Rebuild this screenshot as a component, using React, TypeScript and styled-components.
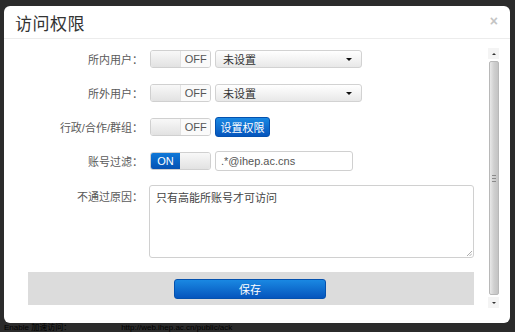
import styled, { createGlobalStyle } from 'styled-components'

const GlobalStyle = createGlobalStyle`
  html, body {
    margin: 0;
    padding: 0;
    background: #2b2b2b;
  }
  body {
    font-family: 'Liberation Sans', 'Noto Sans CJK SC', sans-serif;
    font-size: 11px;
  }
`

const Page = styled.div`
  width: 515px;
  height: 332px;
  box-sizing: border-box;
  padding: 6px 5px 0 4px;
  overflow: hidden;
`

const Modal = styled.div`
  width: 506px;
  height: 317px;
  background: #fff;
  border-radius: 6px;
  display: flex;
  flex-direction: column;
  overflow: hidden;
`

const Header = styled.div`
  height: 32px;
  flex-shrink: 0;
  display: flex;
  align-items: center;
  justify-content: space-between;
  padding: 0 12px 0 11px;
  border-bottom: 1px solid #ececec;
`

const Title = styled.h3`
  margin: 0;
  font-family: 'Noto Sans CJK SC', sans-serif;
  font-size: 17px;
  font-weight: 400;
  color: #333;
  letter-spacing: 0.5px;
`

const Close = styled.span`
  font-family: 'Liberation Sans', sans-serif;
  font-size: 14px;
  font-weight: bold;
  color: #c4c4c4;
  margin-top: -2px;
`

const Body = styled.div`
  flex: 1;
  display: flex;
  gap: 14px;
  padding: 9px 11px 15px 24px;
  min-height: 0;
`

const Content = styled.div`
  width: 446px;
  padding-top: 1px;
  display: flex;
  flex-direction: column;
  gap: 14px;
`

const Row = styled.div<{ $top?: boolean }>`
  display: flex;
  align-items: ${(p) => (p.$top ? 'flex-start' : 'center')};
  gap: 7px;
  min-height: 20px;
`

const Label = styled.label<{ $top?: boolean }>`
  width: 115px;
  flex-shrink: 0;
  text-align: right;
  color: #5a5a5a;
  font-size: 11px;
  white-space: nowrap;
  padding-top: ${(p) => (p.$top ? '3px' : '0')};
`

const Switch = styled.div`
  display: flex;
  width: 61px;
  height: 18px;
  box-sizing: border-box;
  border: 1px solid #d0d0d0;
  border-radius: 3px;
  overflow: hidden;
  flex-shrink: 0;
`

const SwitchPart = styled.span<{ $kind: 'on' | 'off' | 'blank'; $w: number }>`
  width: ${(p) => p.$w}px;
  display: flex;
  align-items: center;
  justify-content: center;
  font-size: 11px;
  color: ${(p) => (p.$kind === 'on' ? '#fff' : '#555')};
  background: ${(p) =>
    p.$kind === 'on'
      ? 'linear-gradient(to bottom, #0f78d8, #0552b4)'
      : p.$kind === 'off'
        ? '#fafafa'
        : 'linear-gradient(to bottom, #f8f8f8, #e2e2e2)'};
  border-left: ${(p) => (p.$kind === 'off' ? '1px solid #e2e2e2' : 'none')};
`

const Toggle = ({ on }: { on: boolean }) =>
  on ? (
    <Switch>
      <SwitchPart $kind="on" $w={30}>ON</SwitchPart>
      <SwitchPart $kind="blank" $w={31} />
    </Switch>
  ) : (
    <Switch>
      <SwitchPart $kind="blank" $w={31} />
      <SwitchPart $kind="off" $w={30}>OFF</SwitchPart>
    </Switch>
  )

const Select = styled.div`
  width: 147px;
  height: 18px;
  box-sizing: border-box;
  margin-left: -3px;
  display: flex;
  align-items: center;
  justify-content: space-between;
  padding: 0 9px 0 7px;
  border: 1px solid #d2d2d2;
  border-radius: 3px;
  background: linear-gradient(to bottom, #ffffff, #e8e8e8);
  color: #333;
  font-size: 11px;
`

const Caret = styled.span`
  width: 0;
  height: 0;
  border-left: 3px solid transparent;
  border-right: 3px solid transparent;
  border-top: 3px solid #111;
`

const BlueButton = styled.button<{ $w: number; $shift?: boolean }>`
  width: ${(p) => p.$w}px;
  height: 20px;
  margin-left: ${(p) => (p.$shift ? '-3px' : '0')};
  border: 1px solid #0451ae;
  border-radius: 3px;
  background: linear-gradient(to bottom, #1a88e2, #0555bd);
  color: #fff;
  font-family: 'Liberation Sans', 'Noto Sans CJK SC', sans-serif;
  font-size: 11px;
  padding: 0;
  display: flex;
  align-items: center;
  justify-content: center;
`

const TextInput = styled.div`
  width: 138px;
  height: 20px;
  box-sizing: border-box;
  margin-left: -3px;
  display: flex;
  align-items: center;
  padding: 0 5px;
  border: 1px solid #d0d0d0;
  border-radius: 3px;
  color: #555;
  font-size: 11px;
`

const TextArea = styled.div`
  width: 325px;
  height: 73px;
  box-sizing: border-box;
  margin-left: -1px;
  padding: 3px 6px;
  border: 1px solid #d0d0d0;
  border-radius: 3px;
  color: #444;
  font-size: 11px;
  position: relative;
`

const Grip = styled.svg`
  position: absolute;
  right: 1px;
  bottom: 1px;
`

const Footer = styled.div`
  height: 33px;
  background: #dcdcdc;
  display: flex;
  align-items: center;
  justify-content: center;
  padding-right: 2px;
`

const Scrollbar = styled.div`
  width: 11px;
  display: flex;
  flex-direction: column;
  align-items: center;
  gap: 2px;
`

const Arrow = styled.div<{ $down?: boolean }>`
  width: 11px;
  height: 11px;
  display: flex;
  align-items: center;
  justify-content: center;
  background: #f4f4f4;
  &::after {
    content: '';
    width: 0;
    height: 0;
    border-left: 2px solid transparent;
    border-right: 2px solid transparent;
    ${(p) => (p.$down ? 'border-top: 2px solid #333;' : 'border-bottom: 2px solid #333;')}
  }
`

const Thumb = styled.div`
  flex: 1;
  width: 10px;
  box-sizing: border-box;
  border: 1px solid #b8b8b8;
  border-radius: 2px;
  background: linear-gradient(to right, #e8e8e8, #cfcfcf 50%, #c4c4c4);
  display: flex;
  align-items: center;
  justify-content: center;
`

const ThumbGrip = styled.span`
  width: 4px;
  height: 5px;
  border-top: 1px solid #8a8a8a;
  border-bottom: 1px solid #8a8a8a;
  background: linear-gradient(to bottom, transparent 40%, #8a8a8a 40%, #8a8a8a 60%, transparent 60%);
`

const BottomStrip = styled.div`
  height: 9px;
  display: flex;
  align-items: center;
  gap: 50px;
  font-size: 8px;
  line-height: 9px;
  color: #000;
  white-space: nowrap;
`

const App = () => {
  return (
    <>
      <GlobalStyle />
      <Page>
        <Modal>
          <Header>
            <Title>访问权限</Title>
            <Close>×</Close>
          </Header>
          <Body>
            <Content>
              <Row>
                <Label>所内用户：</Label>
                <Toggle on={false} />
                <Select>
                  <span>未设置</span>
                  <Caret />
                </Select>
              </Row>
              <Row>
                <Label>所外用户：</Label>
                <Toggle on={false} />
                <Select>
                  <span>未设置</span>
                  <Caret />
                </Select>
              </Row>
              <Row>
                <Label>行政/合作/群组：</Label>
                <Toggle on={false} />
                <BlueButton $w={55} $shift>设置权限</BlueButton>
              </Row>
              <Row>
                <Label>账号过滤：</Label>
                <Toggle on />
                <TextInput>.*@ihep.ac.cns</TextInput>
              </Row>
              <Row $top>
                <Label $top>不通过原因：</Label>
                <TextArea>
                  只有高能所账号才可访问
                  <Grip width="6" height="6" viewBox="0 0 6 6">
                    <path d="M1 6 L6 1 M3.5 6 L6 3.5" stroke="#999" strokeWidth="0.8" />
                  </Grip>
                </TextArea>
              </Row>
              <Footer>
                <BlueButton $w={152}>保存</BlueButton>
              </Footer>
            </Content>
            <Scrollbar>
              <Arrow />
              <Thumb>
                <ThumbGrip />
              </Thumb>
              <Arrow $down />
            </Scrollbar>
          </Body>
        </Modal>
        <BottomStrip>
          <span>Enable 加速访问：</span>
          <span>http://web.ihep.ac.cn/public/ack</span>
        </BottomStrip>
      </Page>
    </>
  )
}

export default App
